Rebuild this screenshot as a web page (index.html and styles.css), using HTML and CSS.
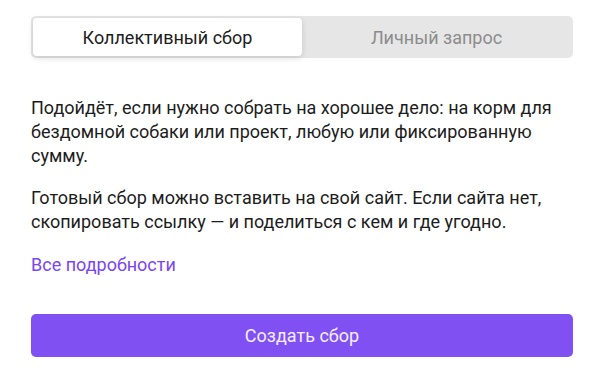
FILE: index.html
```html
<!DOCTYPE html>
<html lang="ru">
<head>
<meta charset="utf-8">
<link rel="stylesheet" href="styles.css">
</head>
<body>
<div class="card">
  <div class="tabs">
    <div class="tab active">Коллективный сбор</div>
    <div class="tab">Личный запрос</div>
  </div>
  <div class="content">
    <p>Подойдёт, если нужно собрать на хорошее дело: на корм для бездомной собаки или проект, любую или фиксированную сумму.</p>
    <p>Готовый сбор можно вставить на свой сайт. Если сайта нет, скопировать ссылку — и поделиться с кем и где угодно.</p>
    <a class="more" href="#">Все подробности</a>
  </div>
  <button class="create">Создать сбор</button>
</div>
</body>
</html>
```
FILE: styles.css
```css
* { box-sizing: border-box; }
html, body { margin: 0; padding: 0; background: #fff; }
body {
  font-family: Roboto, "Liberation Sans", sans-serif;
  color: #1c1c1c;
  width: 600px;
  height: 384px;
}
.card {
  padding: 16px 27px 0 31px;
  display: flex;
  flex-direction: column;
}
.tabs {
  display: flex;
  background: #e6e6e6;
  border-radius: 5px;
  padding: 2px;
  height: 42px;
}
.tab {
  flex: 1;
  display: flex;
  align-items: center;
  justify-content: center;
  font-size: 18px;
  color: #8c8c8c;
  border-radius: 4px;
}
.tab.active {
  background: #fff;
  color: #1c1c1c;
  box-shadow: 0 2px 6px rgba(0,0,0,0.14);
}
.content {
  padding-top: 38px;
  font-size: 18px;
  line-height: 24px;
}
.content p { margin: 0 0 18px; }
.more {
  display: block;
  color: #7a45f2;
  text-decoration: none;
  margin-top: 19px;
}
.create {
  margin-top: 37px;
  height: 43px;
  border: none;
  border-radius: 5px;
  background: #8150f2;
  color: #f3eeff;
  font-family: inherit;
  font-size: 18px;
}
```
